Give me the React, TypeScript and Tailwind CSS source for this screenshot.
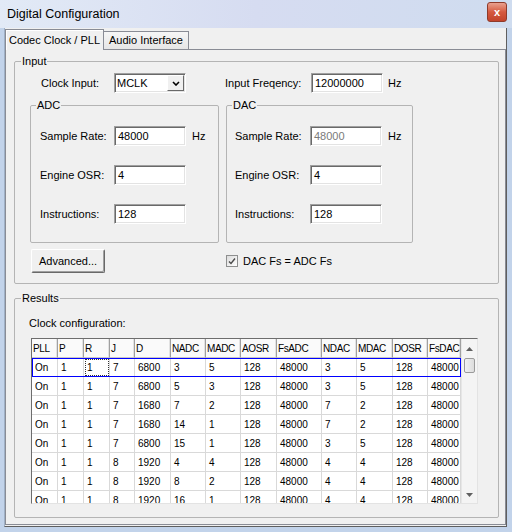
import React from 'react';

// Digital Configuration - Win7 style dialog

const cols = ['PLL', 'P', 'R', 'J', 'D', 'NADC', 'MADC', 'AOSR', 'FsADC', 'NDAC', 'MDAC', 'DOSR', 'FsDAC'];

const rows = [
  ['On', '1', '1', '7', '6800', '3', '5', '128', '48000', '3', '5', '128', '48000'],
  ['On', '1', '1', '7', '6800', '5', '3', '128', '48000', '3', '5', '128', '48000'],
  ['On', '1', '1', '7', '1680', '7', '2', '128', '48000', '7', '2', '128', '48000'],
  ['On', '1', '1', '7', '1680', '14', '1', '128', '48000', '7', '2', '128', '48000'],
  ['On', '1', '1', '7', '6800', '15', '1', '128', '48000', '3', '5', '128', '48000'],
  ['On', '1', '1', '8', '1920', '4', '4', '128', '48000', '4', '4', '128', '48000'],
  ['On', '1', '1', '8', '1920', '8', '2', '128', '48000', '4', '4', '128', '48000'],
  ['On', '1', '1', '8', '1920', '16', '1', '128', '48000', '4', '4', '128', '48000'],
];

const sunken =
  'border border-t-[#a0a0a0] border-l-[#a0a0a0] border-r-white border-b-white shadow-[inset_1px_1px_0_#696969,inset_-1px_-1px_0_#e3e3e3] bg-white';

function TextBox({ value, muted }: { value: string; muted?: boolean }) {
  return (
    <div className={`${sunken} w-[72px] h-[20px] flex items-center pl-[3px] ${muted ? 'text-[#7a7a7a]' : 'text-black'}`}>
      {value}
    </div>
  );
}

function FieldRow({ label, value, hz, muted, labelW }: { label: string; value: string; hz?: boolean; muted?: boolean; labelW: string }) {
  return (
    <div className="flex items-center h-[20px]">
      <span className={labelW}>{label}</span>
      <TextBox value={value} muted={muted} />
      {hz && <span className="ml-[6px]">Hz</span>}
    </div>
  );
}

function ScrollBar() {
  return (
    <div className="w-[16px] flex flex-col bg-[#f4f4f4] border-l border-[#e6e6e6]">
      <div className="h-[19px] flex items-center justify-center">
        <svg width="7" height="4" viewBox="0 0 7 4">
          <path d="M0 4 L3.5 0 L7 4 Z" fill="#606060" />
        </svg>
      </div>
      <div className="mx-[2px] h-[15px] border border-[#9a9a9a] rounded-[2px] bg-gradient-to-r from-[#f2f2f2] to-[#dcdcdc]" />
      <div className="flex-1" />
      <div className="h-[17px] flex items-center justify-center">
        <svg width="7" height="4" viewBox="0 0 7 4">
          <path d="M0 0 L3.5 4 L7 0 Z" fill="#606060" />
        </svg>
      </div>
    </div>
  );
}

function ResultsTable() {
  return (
    <div className="flex w-[447px] h-[166px] border border-t-[#6d6d6d] border-l-[#6d6d6d] border-r-[#e3e3e3] border-b-[#e3e3e3] bg-white overflow-hidden text-[10px]">
      <div className="flex-1 overflow-hidden">
        <table className="table-fixed w-full border-separate border-spacing-0">
          <colgroup>
            <col className="w-[26px]" />
            <col className="w-[26px]" />
            <col className="w-[26px]" />
            <col className="w-[25px]" />
            <col className="w-[36px]" />
            <col className="w-[35px]" />
            <col className="w-[35px]" />
            <col className="w-[36px]" />
            <col className="w-[45px]" />
            <col className="w-[35px]" />
            <col className="w-[36px]" />
            <col className="w-[35px]" />
            <col className="w-[33px]" />
            <col />
          </colgroup>
          <thead>
            <tr>
              {cols.map((c) => (
                <th
                  key={c}
                  className="h-[19px] p-0 pl-[1px] text-left font-normal tracking-[-0.4px] bg-[#fafafa] border-r border-r-[#a0a0a0] border-b border-b-[#c8c8c8] shadow-[inset_-1px_0_0_#e2e2e2] whitespace-nowrap overflow-hidden"
                >
                  {c}
                </th>
              ))}
              <th className="p-0 bg-[#fafafa] border-b border-b-[#c8c8c8]" />
            </tr>
          </thead>
          <tbody>
            {rows.map((r, i) => (
              <tr key={i} className={i === 0 ? 'outline outline-1 -outline-offset-1 outline-[#0000ff]' : ''}>
                {r.map((v, j) => (
                  <td
                    key={j}
                    className={`h-[19px] p-0 pl-[3px] border-r border-b border-[#d9d9d9] whitespace-nowrap overflow-hidden ${
                      i === 0 && j === 2 ? 'outline outline-1 outline-dotted -outline-offset-2 outline-[#333]' : ''
                    }`}
                  >
                    {v}
                  </td>
                ))}
                <td className="p-0" />
              </tr>
            ))}
          </tbody>
        </table>
      </div>
      <ScrollBar />
    </div>
  );
}

export default function App() {
  return (
    <div className="w-[512px] h-[532px] flex flex-col overflow-hidden bg-[#c2d3ea] text-[11px] text-black font-['Liberation_Sans',Arial,sans-serif]">
      {/* title bar */}
      <div className="h-[28px] flex items-center justify-between pl-[7px] pr-[5px] bg-gradient-to-r from-[#e2eaf6] via-[#d6dcf1] to-[#cfdcef]">
        <span className="text-[12.5px]">Digital Configuration</span>
        <div className="w-[20px] h-[20px] mb-[4px] rounded-[3px] border border-[#8f3a2a] bg-gradient-to-b from-[#e8a08e] via-[#d5593f] to-[#c2432b] flex items-center justify-center text-white font-bold text-[11px] leading-none">
          x
        </div>
      </div>

      {/* client */}
      <div className="ml-[4px] mr-[5px] h-[499px] bg-[#f0f0f0] border-l border-l-[#9fb0c6] border-r border-b border-[#5f5f5f] pt-[2px]">
        {/* tabs */}
        <div className="flex items-end h-[19px]">
          <div className="relative z-10 h-[21px] -mb-[1px] border border-b-0 border-[#898c95] bg-[#f0f0f0] flex items-center justify-center whitespace-nowrap shadow-[inset_1px_1px_0_#ffffff] w-[99px]">
            Codec Clock / PLL
          </div>
          <div className="h-[18px] border border-b-0 border-l-0 border-[#898c95] bg-gradient-to-b from-[#f6f6f6] to-[#e6e6e6] flex items-center justify-center whitespace-nowrap w-[85px]">
            Audio Interface
          </div>
        </div>

        {/* tab panel */}
        <div className="w-[501px] h-[476px] border border-[#898c95] bg-[#f0f0f0] pt-[5px]">
          <fieldset className="ml-[8px] w-[485px] h-[229px] border border-[#b4b4b4] rounded-[2px]">
            <legend className="ml-[6px] px-[1px] leading-[13px]">Input</legend>

            <div className="flex items-center h-[20px] mt-[5px] pl-[26px]">
              <span className="w-[73px]">Clock Input:</span>
              <div className={`${sunken} w-[72px] h-[20px] flex items-center pl-[2px] pr-[1px]`}>
                <span className="flex-1">MCLK</span>
                <div className="w-[17px] h-[16px] border border-t-white border-l-white border-r-[#696969] border-b-[#696969] bg-[#f0f0f0] flex items-center justify-center">
                  <svg width="8" height="5" viewBox="0 0 8 5">
                    <path d="M1 1 L4 4 L7 1" stroke="#000" strokeWidth="1.6" fill="none" />
                  </svg>
                </div>
              </div>
              <span className="ml-[39px] w-[86px]">Input Freqency:</span>
              <TextBox value="12000000" />
              <span className="ml-[5px]">Hz</span>
            </div>

            <div className="flex mt-[6px] pl-[15px]">
              <fieldset className="w-[189px] h-[144px] border border-[#b4b4b4] rounded-[2px]">
                <legend className="ml-[5px] px-[1px] leading-[13px]">ADC</legend>
                <div className="flex flex-col gap-[19px] pl-[9px] mt-[14px]">
                  <FieldRow label="Sample Rate:" value="48000" hz labelW="w-[74px]" />
                  <FieldRow label="Engine OSR:" value="4" labelW="w-[74px]" />
                  <FieldRow label="Instructions:" value="128" labelW="w-[74px]" />
                </div>
              </fieldset>
              <fieldset className="ml-[7px] w-[187px] h-[144px] border border-[#b4b4b4] rounded-[2px]">
                <legend className="ml-[5px] px-[1px] leading-[13px]">DAC</legend>
                <div className="flex flex-col gap-[19px] pl-[8px] mt-[14px]">
                  <FieldRow label="Sample Rate:" value="48000" hz muted labelW="w-[75px]" />
                  <FieldRow label="Engine OSR:" value="4" labelW="w-[75px]" />
                  <FieldRow label="Instructions:" value="128" labelW="w-[75px]" />
                </div>
              </fieldset>
            </div>

            <div className="flex items-center mt-[6px] pl-[16px]">
              <div className="w-[74px] h-[24px] flex items-center justify-center border border-t-white border-l-white border-r-[#696969] border-b-[#696969] shadow-[inset_-1px_-1px_0_#a0a0a0] bg-[#f0f0f0] rounded-[2px]">
                Advanced...
              </div>
              <div className="ml-[121px] flex items-center">
                <div className="w-[12px] h-[12px] border border-[#8e8f8f] bg-gradient-to-br from-[#dcdcdc] to-white flex items-center justify-center">
                  <svg width="8" height="8" viewBox="0 0 8 8">
                    <path d="M1 4.5 L3 6.5 L7 1.5" stroke="#4a4a4a" strokeWidth="1.4" fill="none" />
                  </svg>
                </div>
                <span className="ml-[5px]">DAC Fs = ADC Fs</span>
              </div>
            </div>
          </fieldset>

          <fieldset className="ml-[8px] mt-[8px] w-[485px] h-[226px] border border-[#b4b4b4] rounded-[2px]">
            <legend className="ml-[6px] px-[1px] leading-[13px]">Results</legend>
            <div className="pl-[14px] mt-[12px] leading-[13px]">Clock configuration:</div>
            <div className="pl-[16px] mt-[8px]">
              <ResultsTable />
            </div>
          </fieldset>
        </div>
      </div>
    </div>
  );
}
